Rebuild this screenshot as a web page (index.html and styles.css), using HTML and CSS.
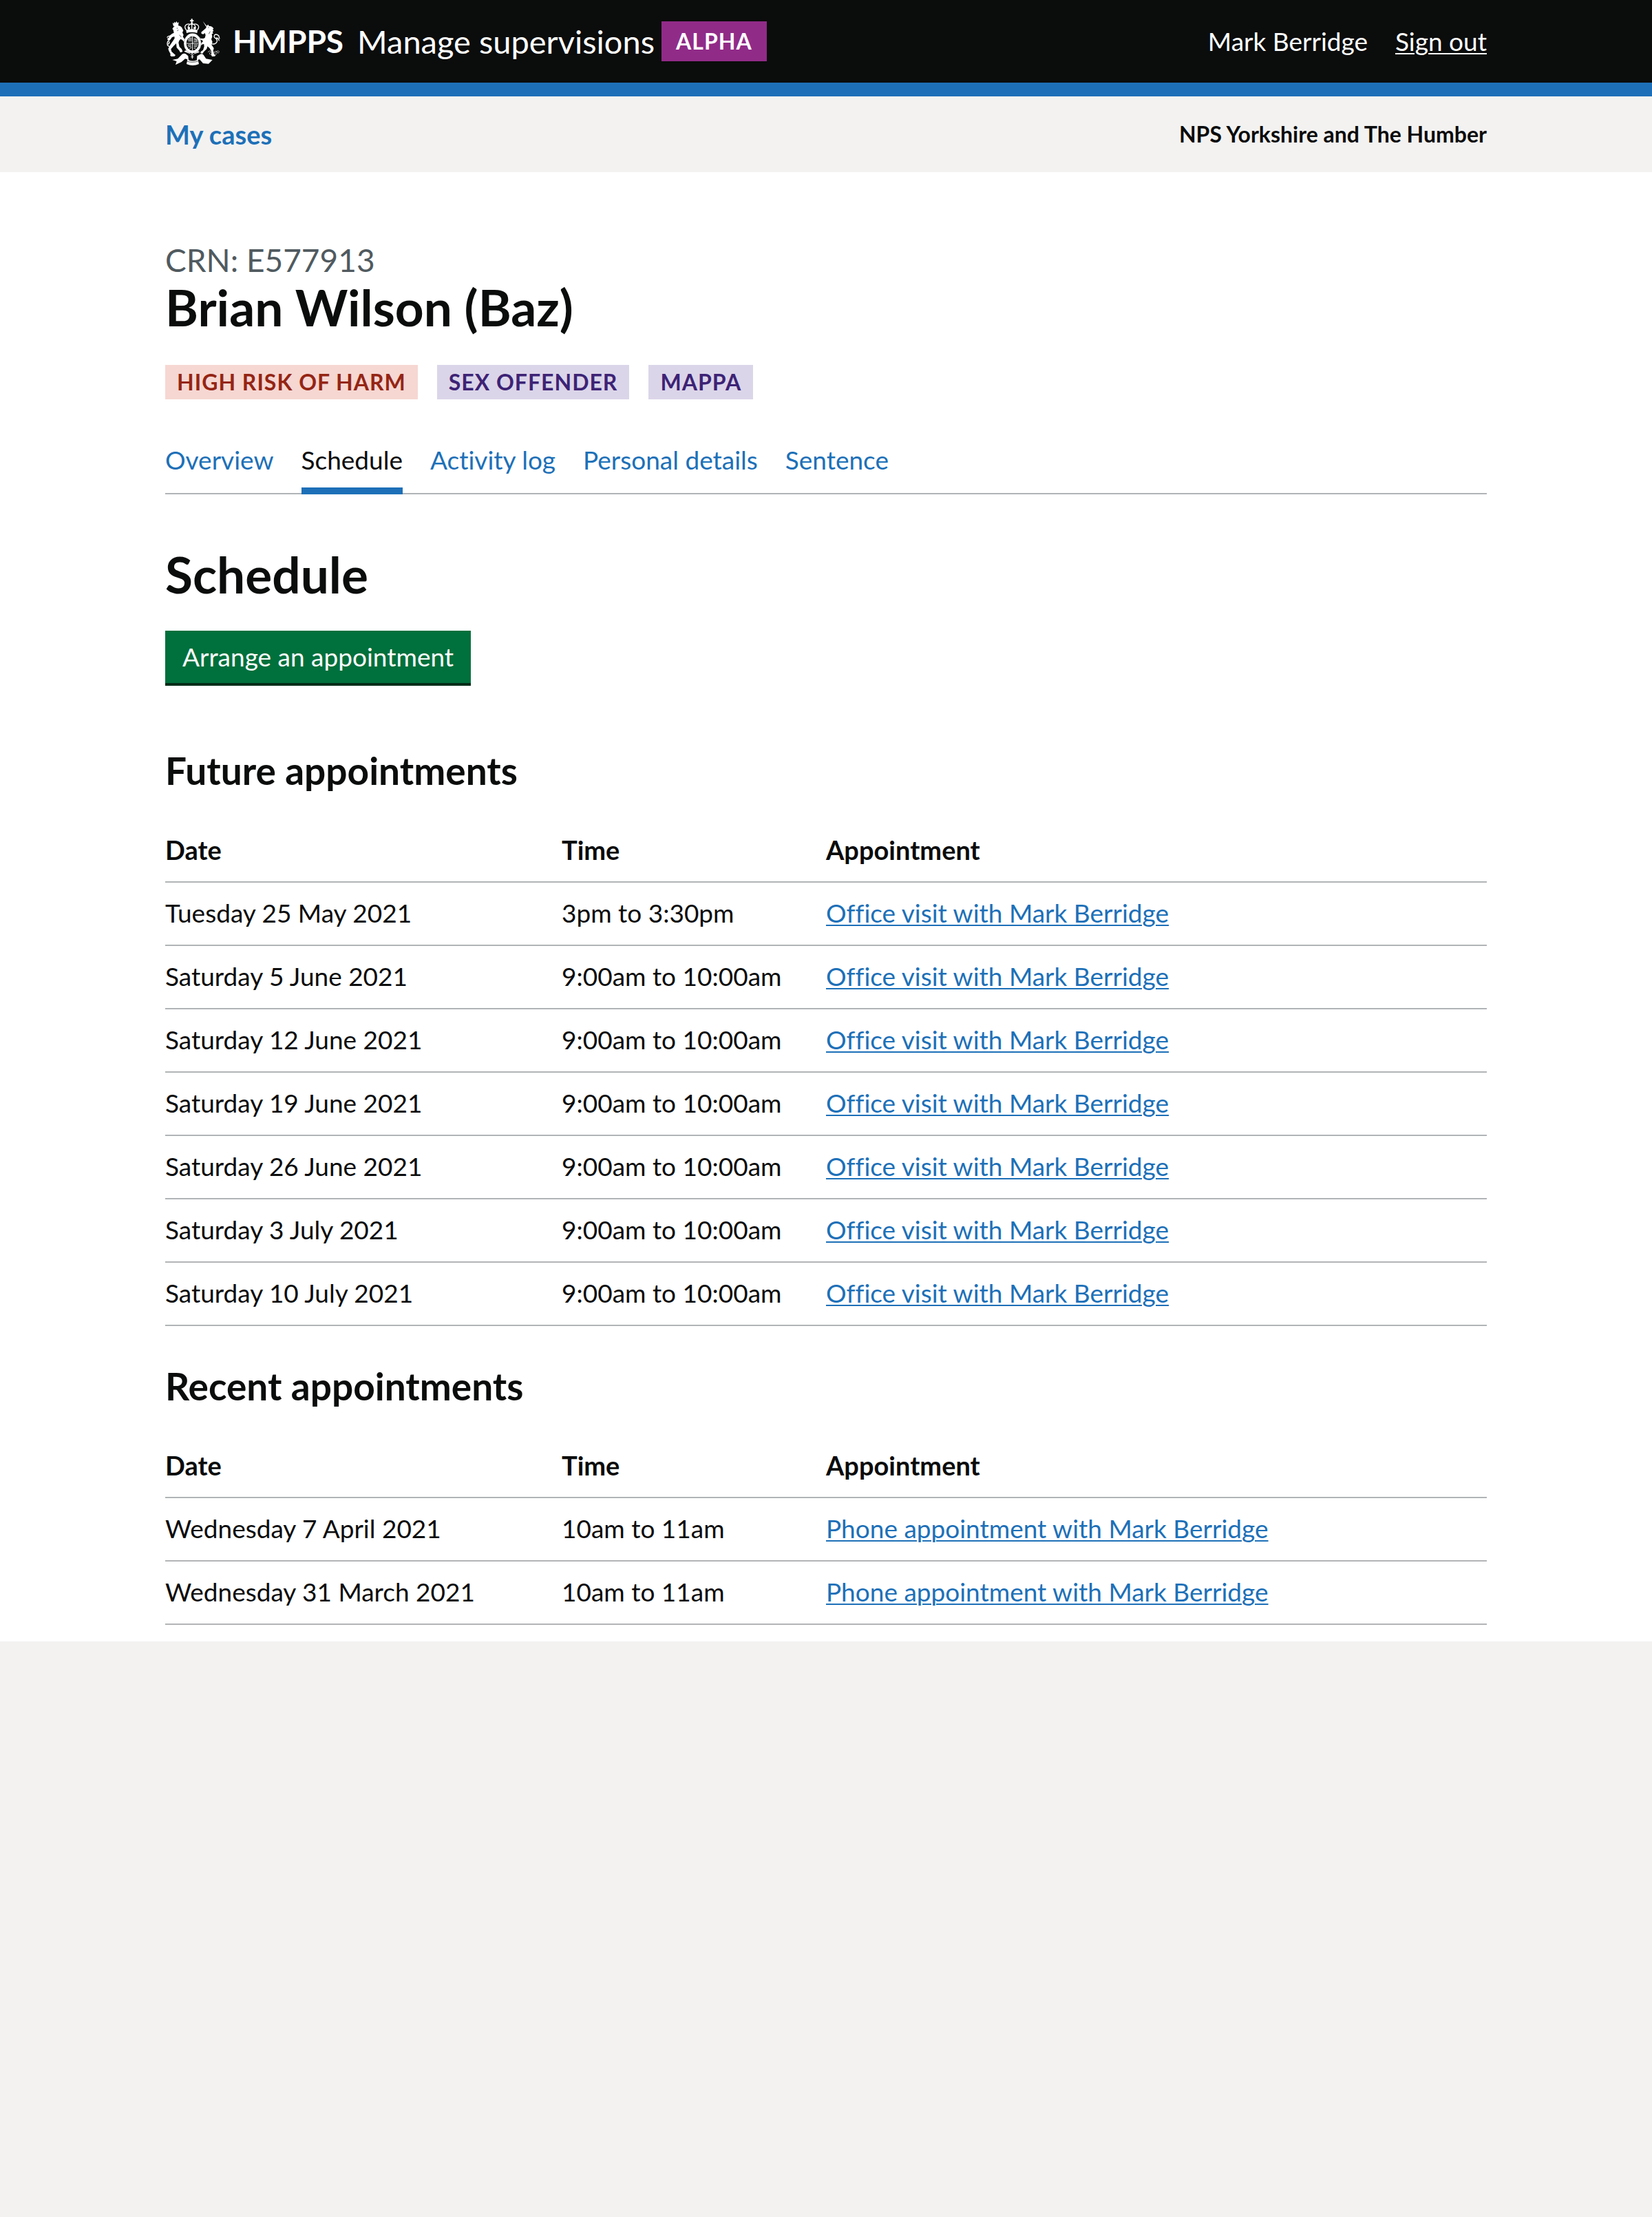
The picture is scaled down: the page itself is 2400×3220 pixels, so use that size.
FILE: index.html
```html
<!DOCTYPE html>
<html lang="en">
<head>
<meta charset="utf-8">
<meta name="viewport" content="width=device-width, initial-scale=1">
<title>Schedule - Manage supervisions</title>
<link rel="stylesheet" href="styles.css">
</head>
<body>
<header class="header">
  <div class="container header-row">
    <div class="brand">
      <svg class="crest" viewBox="30 38 240 207" aria-hidden="true">
        <g fill="#fff">
          <!-- crown -->
          <path d="M143 42h6v6h5v5h-5v8h-6v-8h-5v-5h5z"/>
          <path d="M121 91q25-8 50 0l-2 13q-23-7-46 0z"/>
          <path d="M122 91q-10-13-3-21 8-9 24-3M170 91q10-13 3-21-8-9-24-3M146 62v28M132 88q-6-10 4-21M160 88q6-10-4-21" fill="none" stroke="#fff" stroke-width="4"/>
          <circle cx="146" cy="63" r="5"/><circle cx="134" cy="82" r="5"/><circle cx="158" cy="82" r="5"/>
          <!-- lion -->
          <path d="M62 59l6 4 1-8 6 5 4-8 4 8 6-3-2 15-21 2zM67 77q9-8 20-6 15 3 18 14l4 8-4 9 5 10-3 8 6 9 8 5-1 8-8 1-7-9-8-4-6 7-3 9 4 18 10 10 4 11-10 4-5-9-11-12-2-19-12 12-11 13 3 11 10 9 7 6-4 5-14 1-5-4 1-7-7-13-3-10 10-18 11-16 7-11-1-8-10 3-7 10-5 5-7-3-2-6 6-3 4-10 12-9 7-3-3-13-4-4 4-6z"/>
          <path d="M58 164q-20 0-19-15 1-10 11-18 7-7 0-13-7-3-12 6M47 140q3 10-5 12" fill="none" stroke="#fff" stroke-width="4"/>
          <!-- unicorn -->
          <path d="M194 52l17 21-3 3zM207 83l5-12 6-4 2 6q16 0 21 12l-4 3 4 7-5 3 3 8-6 2 2 12-4 11 5 12-4 12 10 15-3 12 4 14 6 4-2 5-13 1-3-6 1-16-9-15-9-7-3 11-13 13-5 7-9-1 1-7 10-7 5-15-1-11-6 1-11 7-6-4 1-6 9-1 9-9-5-5-14-2-7-8 4-6 7 3 3 5 13 1 7-3 3-12-3-9-7 5-8-2-1-7z"/>
          <path d="M231 151q18 4 24-8 4-10-5-16-10-5-5-14 7-7 18 2l4 14M252 125q13 2 12 13" fill="none" stroke="#fff" stroke-width="4"/>
          <path d="M216 187q9-10 15-2t12 2 15-1M228 188a5 5 0 1 0 1 0M247 190a5 5 0 1 0 1 0M259 181a5 5 0 1 0 1 0" fill="none" stroke="#fff" stroke-width="2"/>
          <!-- ribbon -->
          <path d="M61 221l24-5 18-19q10-8 19 0l8 7 2 18q18 7 36 0l1-18 14-8q10-4 15 5l10 15 28 5-17 17-24-2-15-17-7 1 4 19q-27 12-54 0l4-20-10-3-16 14-26 12 5-15z"/>
          <path d="M112 184l13-7 20 12 24-10 11 8-22 8-11 8-12-10z"/>
        </g>
        <!-- garter and shield -->
        <ellipse cx="149" cy="149" rx="38" ry="44" fill="#fff"/>
        <ellipse cx="149" cy="149" rx="38" ry="44" fill="none" stroke="#0b0c0c" stroke-width="1"/>
        <ellipse cx="149" cy="149" rx="27" ry="31" fill="#0b0c0c"/>
        <path d="M149 119v60M123 149h52M129 132h17M130 138h16M132 126h14M155 127l13 5M154 134l17 2M154 142l18-1M128 157l15-2M130 164l14-3M136 171l9-4M155 156h17M155 163h14M155 170h8" fill="none" stroke="#fff" stroke-width="3"/>
        <path d="M138 193l9 9 10-9M147 198v19M140 207h15" fill="none" stroke="#0b0c0c" stroke-width="7"/>
        <path d="M141 196l7 7 7-7M148 199v17M142 208h12" fill="none" stroke="#fff" stroke-width="3"/>
        <path d="M120 225q27 12 57 0" fill="none" stroke="#0b0c0c" stroke-width="2"/>
        <path d="M88 91l-6 3M80 83h5M217 80h4M92 112l8 10M226 97l-6 11" fill="none" stroke="#0b0c0c" stroke-width="2"/>
      </svg>
      <span class="brand-name">HMPPS</span>
      <span class="service-name">Manage supervisions</span>
      <strong class="phase">ALPHA</strong>
    </div>
    <div class="user">
      <span>Mark Berridge</span>
      <a class="sign-out" href="#">Sign out</a>
    </div>
  </div>
</header>
<nav class="primary-nav" aria-label="Primary">
  <div class="container nav-row">
    <a class="nav-link" href="#">My cases</a>
    <span class="region">NPS Yorkshire and The Humber</span>
  </div>
</nav>
<main class="main">
  <div class="container">
    <p class="crn">CRN: E577913</p>
    <h1 class="title">Brian Wilson (Baz)</h1>
    <div class="tags">
      <strong class="tag tag-red">HIGH RISK OF HARM</strong>
      <strong class="tag tag-purple">SEX OFFENDER</strong>
      <strong class="tag tag-purple">MAPPA</strong>
    </div>
    <nav class="tabs" aria-label="Case">
      <a class="tab" href="#">Overview</a>
      <a class="tab tab-current" href="#" aria-current="page">Schedule</a>
      <a class="tab" href="#">Activity log</a>
      <a class="tab" href="#">Personal details</a>
      <a class="tab" href="#">Sentence</a>
    </nav>
    <h2 class="title section-title">Schedule</h2>
    <button class="button" type="button">Arrange an appointment</button>
    <section class="future">
      <h3 class="subtitle">Future appointments</h3>
      <table class="table">
        <thead><tr><th class="col-date" scope="col">Date</th><th class="col-time" scope="col">Time</th><th scope="col">Appointment</th></tr></thead>
        <tbody>
          <tr><td>Tuesday 25 May 2021</td><td>3pm to 3:30pm</td><td><a class="link" href="#">Office visit with Mark Berridge</a></td></tr>
          <tr><td>Saturday 5 June 2021</td><td>9:00am to 10:00am</td><td><a class="link" href="#">Office visit with Mark Berridge</a></td></tr>
          <tr><td>Saturday 12 June 2021</td><td>9:00am to 10:00am</td><td><a class="link" href="#">Office visit with Mark Berridge</a></td></tr>
          <tr><td>Saturday 19 June 2021</td><td>9:00am to 10:00am</td><td><a class="link" href="#">Office visit with Mark Berridge</a></td></tr>
          <tr><td>Saturday 26 June 2021</td><td>9:00am to 10:00am</td><td><a class="link" href="#">Office visit with Mark Berridge</a></td></tr>
          <tr><td>Saturday 3 July 2021</td><td>9:00am to 10:00am</td><td><a class="link" href="#">Office visit with Mark Berridge</a></td></tr>
          <tr><td>Saturday 10 July 2021</td><td>9:00am to 10:00am</td><td><a class="link" href="#">Office visit with Mark Berridge</a></td></tr>
        </tbody>
      </table>
    </section>
    <section class="recent">
      <h3 class="subtitle">Recent appointments</h3>
      <table class="table">
        <thead><tr><th class="col-date" scope="col">Date</th><th class="col-time" scope="col">Time</th><th scope="col">Appointment</th></tr></thead>
        <tbody>
          <tr><td>Wednesday 7 April 2021</td><td>10am to 11am</td><td><a class="link" href="#">Phone appointment with Mark Berridge</a></td></tr>
          <tr><td>Wednesday 31 March 2021</td><td>10am to 11am</td><td><a class="link" href="#">Phone appointment with Mark Berridge</a></td></tr>
        </tbody>
      </table>
    </section>
  </div>
</main>
</body>
</html>
```
FILE: styles.css
```css
* { box-sizing: border-box; }
body {
  margin: 0;
  background: #f3f2f1;
  color: #0b0c0c;
  font-family: Lato, "Liberation Sans", sans-serif;
  font-size: 37px;
  line-height: 50px;
  font-variant-ligatures: none;
}
h1, h2, h3, p { margin: 0; }
.container { max-width: 2000px; margin: 0 auto; padding: 0 40px; }

.header { background: #0b0c0c; color: #fff; border-bottom: 20px solid #1d70b8; }
.header-row { display: flex; flex-wrap: wrap; align-items: center; justify-content: space-between; min-height: 120px; }
.brand { display: flex; align-items: center; font-size: 46px; line-height: 60px; }
.crest { width: 80px; height: 69px; margin-right: 18px; }
.brand-name { font-weight: 700; margin-right: 20px; }
.service-name { font-size: 47px; margin-right: 10px; }
.phase { background: #912b88; font-size: 32px; line-height: 58px; letter-spacing: 1px; padding: 0 21px; }
.user { display: flex; gap: 40px; }
.sign-out { color: #fff; }
.sign-out, .link { text-decoration: underline; text-decoration-thickness: 2px; text-underline-offset: 3px; }

.primary-nav { background: #f3f2f1; }
.nav-row { display: flex; flex-wrap: wrap; align-items: center; justify-content: space-between; padding-top: 30px; padding-bottom: 30px; }
.nav-link { color: #1d70b8; font-size: 38px; font-weight: 700; text-decoration: none; }
.region { font-size: 32px; font-weight: 700; }

.main { background: #fff; padding: 100px 0 24px; }
.crn { color: #505a5f; font-size: 46px; line-height: 56px; }
.title { font-size: 73px; line-height: 80px; font-weight: 700; }
.tags { display: flex; flex-wrap: wrap; gap: 28px; margin-top: 44px; }
.tag { font-size: 32px; line-height: 50px; letter-spacing: 1px; padding: 0 17px; }
.tag-red { background: #f6d7d2; color: #942514; }
.tag-purple { background: #dbd5e9; color: #3d2375; }

.tabs { display: flex; flex-wrap: wrap; gap: 40px; margin-top: 63px; box-shadow: inset 0 -2px #b1b4b6; }
.tab { color: #1d70b8; text-decoration: none; padding-bottom: 15px; border-bottom: 10px solid transparent; }
.tab-current { color: #0b0c0c; border-bottom-color: #1d70b8; }

.section-title { margin-top: 76px; }
.button {
  display: block;
  margin-top: 42px;
  padding: 13px 25px;
  border: 0;
  border-bottom: 4px solid #002d18;
  background: #00703c;
  color: #fff;
  font: inherit;
}
.future { margin-top: 93px; }
.recent { margin-top: 57px; }
.subtitle { font-size: 55px; line-height: 60px; font-weight: 700; margin-bottom: 41px; }
.table { width: 100%; border-collapse: separate; border-spacing: 0; table-layout: fixed; }
.table th, .table td { padding: 19px 20px 21px 0; border-bottom: 2px solid #b1b4b6; text-align: left; }
.table th { font-size: 38px; }
.col-date { width: 30%; }
.col-time { width: 20%; }
.link { color: #1d70b8; }
```
